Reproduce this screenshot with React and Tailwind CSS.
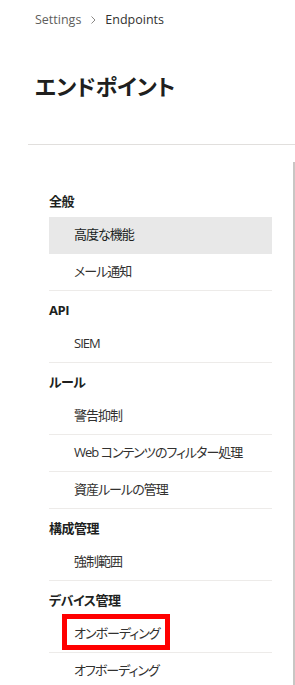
import React from 'react';

const groups = [
  { title: '全般', items: ['高度な機能', 'メール通知'] },
  { title: 'API', items: ['SIEM'] },
  { title: 'ルール', items: ['警告抑制', 'Web コンテンツのフィルター処理', '資産ルールの管理'] },
  { title: '構成管理', items: ['強制範囲'] },
  { title: 'デバイス管理', items: ['オンボーディング', 'オフボーディング'] },
];

const font = "font-['Segoe_UI','Open_Sans','Noto_Sans_CJK_JP',sans-serif] [font-feature-settings:'palt']";

const App = () => {
  return (
    <div className={`w-[295px] h-[685px] overflow-hidden bg-white ${font}`}>
      <div className="pl-[35px] pt-[10px]">
        <div className="flex items-center text-[12.5px] leading-5 text-[#605e5c]">
          <span>Settings</span>
          <svg className="mx-[7px] w-[10px] h-[10px]" viewBox="0 0 10 10" fill="none">
            <path d="M3.5 1.5 L7 5 L3.5 8.5" stroke="#8a8886" strokeWidth="1" />
          </svg>
          <span className="text-[#323130]">Endpoints</span>
        </div>
        <h1 className="mt-[40px] text-[22px] leading-[32px] font-bold text-[#201f1e]">エンドポイント</h1>
      </div>

      <div className="mt-[42px] ml-[28px] border-t border-[#e1dfdd]"></div>

      <div className="flex h-full">
        <nav className="ml-[49px] w-[223px] pt-[37px] shrink-0">
          {groups.map(g => (
            <div key={g.title}>
              <div className="h-[35px] pt-[4px] flex items-center text-[13px] font-bold tracking-[-0.5px] text-[#201f1e]">
                {g.title}
              </div>
              {g.items.map(item => {
                const selected = item === '高度な機能';
                const marked = item === 'オンボーディング';
                return (
                  <div
                    key={item}
                    className={`h-[37px] flex items-center pl-[25px] text-[13px] tracking-[-1px] border-b ${selected ? 'bg-[#e8e8e8] border-[#e8e8e8] text-[#201f1e]' : 'border-[#edebe9] text-[#323130]'}`}
                  >
                    <span className="relative">
                      {item}
                      {marked && (
                        <span className="absolute left-[-12px] right-[-11px] top-[-10px] h-[36px] border-[5px] border-[#ff0000]"></span>
                      )}
                    </span>
                  </div>
                );
              })}
            </div>
          ))}
        </nav>
        <div className="ml-[21px] mt-[17px] flex-1 border-l-2 border-[#c8c6c4]"></div>
      </div>
    </div>
  );
};

export default App;
